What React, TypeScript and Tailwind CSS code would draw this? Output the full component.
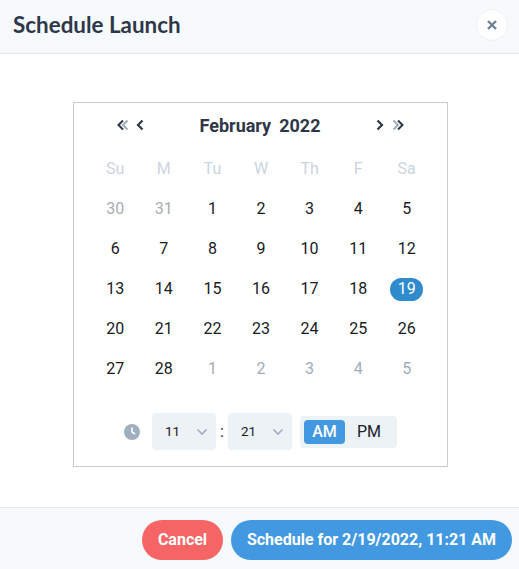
import React from 'react';

const weekDays = ['Su', 'M', 'Tu', 'W', 'Th', 'F', 'Sa'];

// Days of the grid, prev = end of January, next = start of March
const days = [
  { n: 30, tone: 'prev' },
  { n: 31, tone: 'prev' },
  ...Array.from({ length: 28 }, (_, i) => ({ n: i + 1, tone: 'cur' })),
  ...[1, 2, 3, 4, 5].map((n) => ({ n, tone: 'next' })),
];

const toneClass: Record<string, string> = {
  prev: 'text-[#a9adb3]',
  cur: 'text-[#1a1a1f]',
  next: 'text-[#a0aeb8]',
};

const Chevron: React.FC<{ dir: 'left' | 'right' }> = ({ dir }) => (
  <svg width="10" height="12" viewBox="0 0 10 12" fill="none" stroke="#2d3748" strokeWidth={2.2}>
    <path d={dir === 'left' ? 'M7.5 1.5 3 6l4.5 4.5' : 'M2.5 1.5 7 6l-4.5 4.5'} />
  </svg>
);

const DoubleChevron: React.FC<{ dir: 'left' | 'right' }> = ({ dir }) => (
  <svg width="14" height="12" viewBox="0 0 14 12" fill="none" strokeWidth={2}>
    {dir === 'left' ? (
      <>
        <path d="M11.5 1.5 7 6l4.5 4.5" stroke="#a0aec0" />
        <path d="M7 1.5 2.5 6 7 10.5" stroke="#2d3748" />
      </>
    ) : (
      <>
        <path d="M2.5 1.5 7 6l-4.5 4.5" stroke="#a0aec0" />
        <path d="M7 1.5 11.5 6 7 10.5" stroke="#2d3748" />
      </>
    )}
  </svg>
);

const TimeSelect: React.FC<{ value: string }> = ({ value }) => (
  <div className="flex h-[37px] w-16 items-center justify-between rounded bg-[#edf2f7] pl-[13px] pr-[8px] text-[13.5px] text-[#1a202c]">
    <span>{value}</span>
    <svg width="12" height="8" viewBox="0 0 12 8" fill="none" stroke="#a0aec0" strokeWidth={1.6}>
      <path d="M1.5 1.5 6 6l4.5-4.5" />
    </svg>
  </div>
);

export default function App() {
  return (
    <div className="flex h-[569px] w-[519px] flex-col overflow-hidden bg-white font-['Roboto',sans-serif]">
      {/* Header */}
      <div className="flex h-[54px] shrink-0 items-center justify-between border-b border-[#e2e8f0] bg-[#f7fafc] pb-[3px] pl-[13px] pr-[11px]">
        <h2 className="font-['Lato',sans-serif] text-[22.4px] font-bold text-[#2d3748]">Schedule Launch</h2>
        <button className="flex h-8 w-8 items-center justify-center rounded-full border border-[#edf2f7] bg-white">
          <svg width="10" height="10" viewBox="0 0 10 10" fill="none" stroke="#718096" strokeWidth={2.4}>
            <path d="M1 1l8 8M9 1 1 9" />
          </svg>
        </button>
      </div>

      {/* Calendar */}
      <div className="flex-1 pl-[73px] pt-[48px]">
        <div className="h-[365px] w-[375px] border border-[#cccccc] pl-[17px] pr-[16px]">
          <div className="flex h-[46px] items-center justify-between pb-[2px] pl-[25px] pr-[26px]">
            <div className="flex items-center gap-[5px]">
              <DoubleChevron dir="left" />
              <Chevron dir="left" />
            </div>
            <div className="flex gap-[8px] text-[18px] font-bold text-[#2d3748]">
              <span>February</span>
              <span>2022</span>
            </div>
            <div className="flex items-center gap-[6px]">
              <Chevron dir="right" />
              <DoubleChevron dir="right" />
            </div>
          </div>

          <div className="grid grid-cols-7">
            {weekDays.map((d) => (
              <div key={d} className="flex h-10 items-center justify-center text-[16px] text-[#cbd5e0]">
                {d}
              </div>
            ))}
            {days.map((d, i) => (
              <div key={i} className="flex h-10 items-center justify-center text-[16px]">
                {d.n === 19 ? (
                  <span className="flex h-[23px] w-[33px] items-center justify-center rounded-full bg-[#2f8bcc] text-white">
                    {d.n}
                  </span>
                ) : (
                  <span className={toneClass[d.tone]}>{d.n}</span>
                )}
              </div>
            ))}
          </div>

          {/* Time picker */}
          <div className="mt-[24px] flex items-center pl-[33px]">
            <svg width="16" height="16" viewBox="0 0 16 16" className="mr-[12px]">
              <circle cx="8" cy="8" r="8" fill="#a0aec0" />
              <path d="M8 3.5V8l3 2" fill="none" stroke="#fff" strokeWidth={1.6} />
            </svg>
            <TimeSelect value="11" />
            <span className="w-3 text-center text-[16px] text-[#1a202c]">:</span>
            <TimeSelect value="21" />
            <div className="ml-2 flex h-8 w-[97px] items-center rounded bg-[#edf2f7] pl-1 text-[16px]">
              <span className="flex h-6 w-[41px] items-center justify-center rounded bg-[#4299e1] font-medium text-white">
                AM
              </span>
              <span className="w-[48px] text-center text-[#1a202c]">PM</span>
            </div>
          </div>
        </div>
      </div>

      {/* Footer */}
      <div className="flex h-[62px] shrink-0 items-start justify-end gap-2 border-t border-[#e2e8f0] bg-[#f7fafc] pr-[7px] pt-3">
        <button className="h-10 w-[81px] rounded-full bg-[#f56565] text-[16px] font-bold text-white">Cancel</button>
        <button className="h-10 w-[281px] rounded-full bg-[#4299e1] text-[16px] font-bold text-white">
          Schedule for 2/19/2022, 11:21 AM
        </button>
      </div>
    </div>
  );
}
